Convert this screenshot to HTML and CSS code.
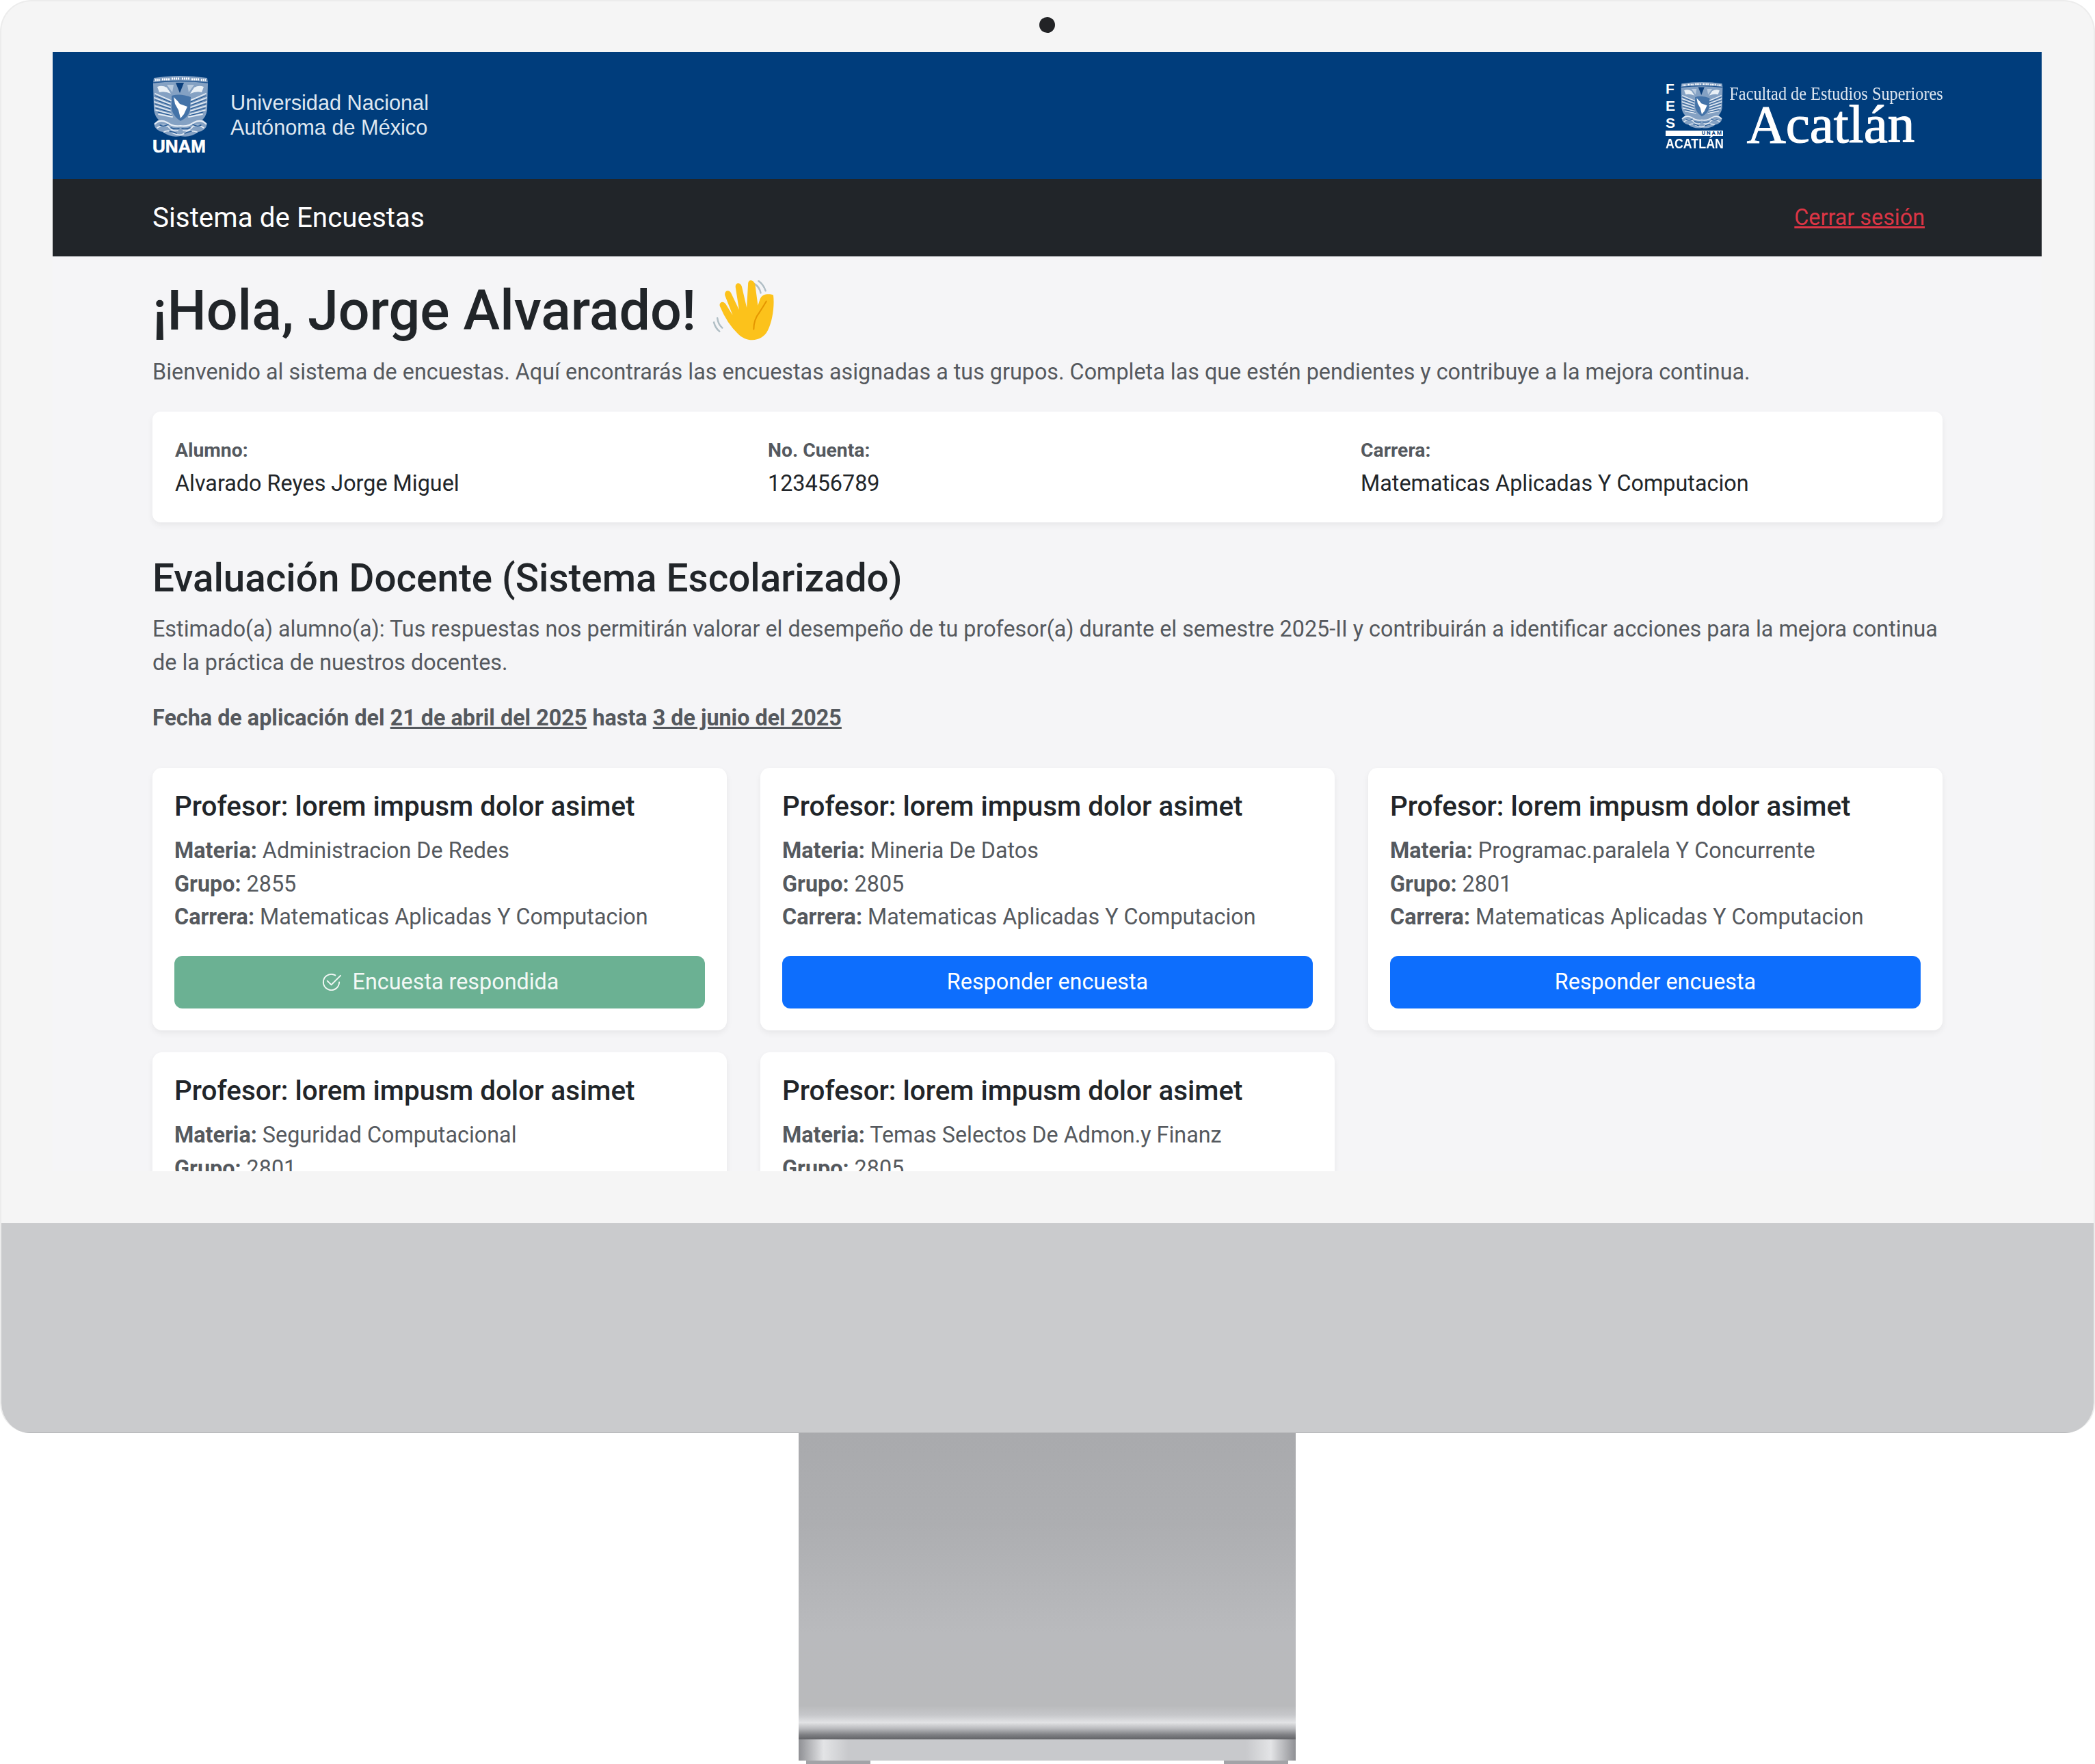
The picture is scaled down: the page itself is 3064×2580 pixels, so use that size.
FILE: index.html
```html
<!DOCTYPE html>
<html lang="es">
<head>
  <meta charset="UTF-8" />
  <title>Sistema de Encuestas</title>
  <link rel="stylesheet" href="styles.css">
</head>
<body>
  <svg class="defs" width="0" height="0" aria-hidden="true">
    <symbol id="crest" viewBox="0 0 80 92">
      <!-- silhouette -->
      <path d="M1 3 Q40 -3 79 3 L80 10 L79 50 Q77 60 72 64 L79 70 Q77 80 66 82 Q54 91 40 88 Q26 91 14 82 Q3 80 1 70 L8 64 Q3 60 1 50 L0 10 Z" fill="#84a1c3"/>
      <!-- top band -->
      <path d="M3 6 H10M13 5 H24M27 4 H38M42 4 H53M56 5 H67M70 6 H77" fill="none" stroke="#fff" stroke-width="3" stroke-dasharray="2 1"/>
      <path d="M0 10 Q40 5 80 10" fill="none" stroke="#1f5490" stroke-width="1.6"/>
      <!-- wings -->
      <g fill="none" stroke-linecap="round">
        <path d="M3 26 L26 36M2 32 L25 41M2 38 L25 46M3 44 L25 51M4 50 L26 56M8 56 L28 60" stroke="#e6edf5" stroke-width="1.8"/>
        <path d="M77 26 L54 36M78 32 L55 41M78 38 L55 46M77 44 L55 51M76 50 L54 56M72 56 L52 60" stroke="#e6edf5" stroke-width="1.8"/>
        <path d="M3 29 L25 38M3 35 L25 43M3 41 L25 48M4 47 L25 53M7 53 L27 58M77 29 L55 38M77 35 L55 43M77 41 L55 48M76 47 L55 53M73 53 L53 58" stroke="#1f5490" stroke-width="1.1"/>
      </g>
      <!-- heads -->
      <path d="M6 16 Q13 13 20 17 L26 26 Q17 22 9 24 Z" fill="#e9f0f6"/>
      <path d="M74 16 Q67 13 60 17 L54 26 Q63 22 71 24 Z" fill="#e9f0f6"/>
      <path d="M20 13 L30 13 L28 24 Z M60 13 L50 13 L52 24 Z" fill="#b9cbdf"/>
      <!-- notch and shield -->
      <path d="M33 10 L45 10 L39 25 Z" fill="#0b3f7c"/>
      <path d="M27 29 Q40 25 55 31 L54 50 Q51 61 40 66 Q29 59 27 48 Z" fill="#4473a8"/>
      <path d="M30 31 L36 37 L39 41 L50 45 L45 56 L40 62 L37 50 L32 41 Z" fill="#fff"/>
      <!-- wreath -->
      <g fill="none" stroke-linecap="round">
        <path d="M3 70 Q10 63 20 68 Q30 75 40 73 Q50 75 60 68 Q70 63 77 70" stroke="#e6edf5" stroke-width="2.2"/>
        <path d="M6 76 Q14 70 22 74 Q28 82 36 80M74 76 Q66 70 58 74 Q52 82 44 80M16 82 Q24 78 30 84Q38 88 44 85Q52 78 64 82" stroke="#e6edf5" stroke-width="1.8"/>
        <path d="M10 72 Q16 75 22 71M26 76 Q32 78 38 77M70 72 Q64 75 58 71M54 76 Q48 78 42 77M24 81 Q30 82 34 84M56 81 Q50 82 46 84" stroke="#1f5490" stroke-width="1.4"/>
      </g>
    </symbol>
  </svg>

  <div class="monitor">
    <span class="camera"></span>
    <main class="screen">
      <header class="brand-bar">
        <div class="unam-logo">
          <div class="unam-mark">
            <svg class="unam-crest"><use href="#crest"/></svg>
            <span class="unam-word">UNAM</span>
          </div>
          <div class="unam-name">Universidad Nacional<br>Autónoma de México</div>
        </div>
        <div class="fes-logo">
          <div class="fes-mark">
            <div class="fes-top">
              <div class="fes-letters"><span>F</span><span>E</span><span>S</span></div>
              <svg class="fes-crest"><use href="#crest"/></svg>
            </div>
            <div class="fes-strip">UNAM</div>
            <div class="fes-place">ACATLÁN</div>
          </div>
          <div class="fes-name">
            <span class="fes-faculty">Facultad de Estudios Superiores</span>
            <span class="fes-acatlan">Acatlán</span>
          </div>
        </div>
      </header>

      <nav class="navbar">
        <a class="navbar-title" href="#">Sistema de Encuestas</a>
        <a class="logout" href="#">Cerrar sesión</a>
      </nav>

      <section class="content">
        <h1 class="greeting">¡Hola, Jorge Alvarado!
          <svg class="wave" viewBox="0 0 90 88">
            <path d="M61 5 Q68 9 70 18M67 1 Q74 6 77 15M8 54 Q9 63 15 68M3 60 Q5 68 11 73" fill="none" stroke="#b0bec5" stroke-width="2.4" stroke-linecap="round"/>
            <path d="M37 76 Q22 62 12 38 C9 32 16 28 20 34 L30 50 L19 22 C17 15 25 12 28 19 L39 42 L34 10 C33 3 41 2 43 9 L50 39 L52 4 C53 -2 60 -1 62 6 L66 36 L69 27 C72 19 82 19 88 21 C90 36 87 58 80 72 C72 88 50 90 37 76 Z" fill="#fcc21b"/>
            <path d="M78 30 Q72 40 68 46 Q60 56 60 70" fill="none" stroke="#e59600" stroke-width="2" stroke-linecap="round"/>
          </svg>
        </h1>
        <p class="lead-text">Bienvenido al sistema de encuestas. Aquí encontrarás las encuestas asignadas a tus grupos. Completa las que estén pendientes y contribuye a la mejora continua.</p>

        <div class="student-card">
          <div><div class="field-label">Alumno:</div><div class="field-value">Alvarado Reyes Jorge Miguel</div></div>
          <div><div class="field-label">No. Cuenta:</div><div class="field-value">123456789</div></div>
          <div><div class="field-label">Carrera:</div><div class="field-value">Matematicas Aplicadas Y Computacion</div></div>
        </div>

        <h2 class="survey-title">Evaluación Docente (Sistema Escolarizado)</h2>
        <p class="survey-text">Estimado(a) alumno(a): Tus respuestas nos permitirán valorar el desempeño de tu profesor(a) durante el semestre 2025-II y contribuirán a identificar acciones para la mejora continua de la práctica de nuestros docentes.</p>
        <p class="survey-dates">Fecha de aplicación del <u>21 de abril del 2025</u> hasta <u>3 de junio del 2025</u></p>

        <div class="card-grid">
          <article class="survey-card">
            <h3>Profesor: lorem impusm dolor asimet</h3>
            <p><strong>Materia:</strong> Administracion De Redes</p>
            <p><strong>Grupo:</strong> 2855</p>
            <p><strong>Carrera:</strong> Matematicas Aplicadas Y Computacion</p>
            <a class="btn btn-done" href="#">
              <svg class="check-icon" viewBox="0 0 16 16" fill="currentColor"><path d="M2.5 8a5.5 5.5 0 0 1 8.25-4.764.5.5 0 0 0 .5-.866A6.5 6.5 0 1 0 14.5 8a.5.5 0 0 0-1 0 5.5 5.5 0 1 1-11 0"/><path d="M15.354 3.354a.5.5 0 0 0-.708-.708L8 9.293 5.354 6.646a.5.5 0 1 0-.708.708l3 3a.5.5 0 0 0 .708 0l7-7z"/></svg>
              Encuesta respondida
            </a>
          </article>
          <article class="survey-card">
            <h3>Profesor: lorem impusm dolor asimet</h3>
            <p><strong>Materia:</strong> Mineria De Datos</p>
            <p><strong>Grupo:</strong> 2805</p>
            <p><strong>Carrera:</strong> Matematicas Aplicadas Y Computacion</p>
            <a class="btn btn-answer" href="#">Responder encuesta</a>
          </article>
          <article class="survey-card">
            <h3>Profesor: lorem impusm dolor asimet</h3>
            <p><strong>Materia:</strong> Programac.paralela Y Concurrente</p>
            <p><strong>Grupo:</strong> 2801</p>
            <p><strong>Carrera:</strong> Matematicas Aplicadas Y Computacion</p>
            <a class="btn btn-answer" href="#">Responder encuesta</a>
          </article>
          <article class="survey-card">
            <h3>Profesor: lorem impusm dolor asimet</h3>
            <p><strong>Materia:</strong> Seguridad Computacional</p>
            <p><strong>Grupo:</strong> 2801</p>
          </article>
          <article class="survey-card">
            <h3>Profesor: lorem impusm dolor asimet</h3>
            <p><strong>Materia:</strong> Temas Selectos De Admon.y Finanz</p>
            <p><strong>Grupo:</strong> 2805</p>
          </article>
        </div>
      </section>
    </main>
    <div class="chin"></div>
  </div>

  <div class="stand">
    <div class="stand-neck"></div>
    <div class="stand-base"></div>
    <div class="stand-feet"><span></span><span></span></div>
  </div>
</body>
</html>
```

FILE: styles.css
```css
:root {
  --page-bg: #f5f5f7;
  --text-dark: #212529;
  --text-muted: #55595e;
  --unam-blue: #003d7c;
  --font-family: Roboto, "Liberation Sans", sans-serif;
}

* { box-sizing: border-box; }

body {
  margin: 0;
  background: #fff;
  color: var(--text-dark);
  font-family: var(--font-family);
  font-size: 32.33px;
  line-height: 1.5;
}

.defs { position: absolute; }

/* monitor shell */
.monitor {
  position: relative;
  width: 3064px;
  height: 2096px;
  padding-top: 74px;
  background: #f5f5f5;
  border: 2px solid #ececec;
  border-bottom: 0;
  border-radius: 46px 46px 44px 44px;
  overflow: hidden;
}

.camera {
  position: absolute;
  left: 1518px;
  top: 23px;
  width: 23px;
  height: 23px;
  border-radius: 50%;
  background: #222326;
}

.screen {
  width: 2909px;
  height: 1637px;
  margin-left: 75px;
  background: var(--page-bg);
  overflow: hidden;
}

.chin {
  position: absolute;
  left: -2px;
  right: -2px;
  top: 1787px;
  height: 309px;
  background: #cacbcd;
  border-bottom: 3px solid #b4b5b8;
}

/* stand */
.stand {
  width: 727px;
  margin-left: 1168px;
}

.stand-neck {
  height: 448px;
  background: linear-gradient(#a9aaad 0%, #adaeb1 30%, #b9babd 65%, #b9babc 89%, #c6c7ca 92%, #e2e3e5 94.5%, #b8b9bc 96.5%, #7e7f83 98.5%, #626367 100%);
}

.stand-base {
  height: 31px;
  background: linear-gradient(90deg, #8f9094 0, #a0a1a5 1%, #e3e4e6 5%, #c8c9cc 10%, #c8c9cc 90%, #e3e4e6 95%, #a0a1a5 99%, #8f9094 100%);
}

.stand-feet {
  display: flex;
  justify-content: space-between;
  padding: 0 11px;
}

.stand-feet span {
  width: 94px;
  height: 6px;
  background: #a2a3a7;
}

/* header */
.brand-bar {
  display: flex;
  align-items: center;
  justify-content: space-between;
  height: 186px;
  padding: 0 145px 0 146px;
  background: var(--unam-blue);
  color: #fff;
}

.unam-logo {
  display: flex;
  align-items: center;
  gap: 32px;
}

.unam-mark {
  display: flex;
  flex-direction: column;
  width: 82px;
  margin-top: -3px;
}

.unam-crest {
  width: 82px;
  height: 92px;
  filter: blur(0.6px);
}

.unam-word {
  font-family: "Liberation Sans", sans-serif;
  font-weight: 700;
  font-size: 26px;
  line-height: 22px;
  -webkit-text-stroke: 0.6px #fff;
}

.unam-name {
  font-family: "Liberation Sans", sans-serif;
  font-size: 30.7px;
  line-height: 36px;
  color: #dfe7f0;
}

.fes-logo {
  display: flex;
  gap: 11px;
}

.fes-mark {
  width: 84px;
}

.fes-top {
  display: flex;
  justify-content: space-between;
}

.fes-letters {
  display: flex;
  flex-direction: column;
  justify-content: space-between;
  font-family: "Liberation Sans", sans-serif;
  font-size: 21px;
  line-height: 20px;
  font-weight: 700;
}

.fes-crest {
  width: 62px;
  height: 70px;
  filter: blur(0.5px);
}

.fes-strip {
  height: 8px;
  margin: 1px 0 3px;
  background: #fff;
  color: var(--unam-blue);
  font-size: 8px;
  line-height: 8px;
  font-weight: 700;
  text-align: right;
  letter-spacing: 2px;
}

.fes-place {
  font-family: "Liberation Sans", sans-serif;
  font-size: 21px;
  font-weight: 700;
  line-height: 16px;
  white-space: nowrap;
  transform: scaleX(0.85);
  transform-origin: left;
}

.fes-name {
  display: flex;
  flex-direction: column;
  align-items: center;
  width: 310px;
}

.fes-faculty {
  margin-top: 2px;
  font-family: "Liberation Serif", serif;
  font-size: 27px;
  line-height: 30px;
  white-space: nowrap;
  color: #dde6f0;
  transform: scaleX(0.9);
}

.fes-acatlan {
  margin-top: -5px;
  margin-right: 17px;
  font-family: "Liberation Serif", serif;
  font-size: 79px;
  line-height: 70px;
  -webkit-text-stroke: 1.2px #fff;
}

/* nav */
.navbar {
  display: flex;
  align-items: center;
  justify-content: space-between;
  height: 113px;
  padding: 0 171px 0 146px;
  background: var(--text-dark);
}

.navbar-title {
  margin-top: 2px;
  color: #fff;
  font-size: 40.4px;
  text-decoration: none;
}

.logout {
  color: #dc3545;
}

/* content */
.content {
  padding: 32px 145px 0 146px;
}

.greeting {
  display: flex;
  align-items: center;
  gap: 23px;
  margin: 0 0 16px;
  font-size: 80.8px;
  font-weight: 500;
  line-height: 1.2;
  white-space: nowrap;
}

.wave {
  width: 92px;
  height: 90px;
}

.lead-text,
.survey-text,
.survey-dates {
  margin: 0;
  color: var(--text-muted);
}

.student-card {
  display: grid;
  grid-template-columns: repeat(3, 867px);
  height: 162px;
  margin-top: 34px;
  padding: 36px 33px 0;
  background: #fff;
  border-radius: 12px;
  box-shadow: 0 4px 10px rgba(0, 0, 0, 0.06);
}

.field-label {
  color: var(--text-muted);
  font-size: 28.3px;
  font-weight: 700;
}

.field-value {
  margin-top: 2px;
}

.survey-title {
  margin: 48px 0 16px;
  font-size: 56.6px;
  font-weight: 500;
  line-height: 1.2;
}

.survey-dates {
  margin-top: 33px;
  font-weight: 700;
}

.card-grid {
  display: grid;
  grid-template-columns: repeat(3, 1fr);
  gap: 32px 49px;
  margin-top: 48px;
}

.survey-card {
  height: 384px;
  padding: 32px;
  background: #fff;
  border-radius: 14px;
  box-shadow: 0 4px 10px rgba(0, 0, 0, 0.06);
  color: var(--text-muted);
}

.survey-card h3 {
  margin: 1px 0 16px;
  color: var(--text-dark);
  font-size: 40.4px;
  font-weight: 500;
  line-height: 1.2;
}

.survey-card p {
  margin: 0;
}

.btn {
  display: flex;
  align-items: center;
  justify-content: center;
  gap: 16px;
  height: 77px;
  margin-top: 32px;
  border-radius: 12px;
  color: #fff;
  text-decoration: none;
}

.btn-answer {
  background: #0d6efd;
}

.btn-done {
  background: #6bb193;
  color: #f2f8f5;
}

.check-icon {
  width: 31px;
  height: 31px;
}
```
